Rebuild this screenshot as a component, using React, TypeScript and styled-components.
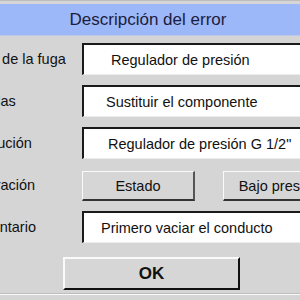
import React from "react";
import styled, { createGlobalStyle } from "styled-components";

const Global = createGlobalStyle`
  html, body {
    margin: 0;
    padding: 0;
    background: #d5d5d5;
    overflow: hidden;
  }
  body {
    font-family: "Liberation Sans", Arial, sans-serif;
  }
`;

interface Row {
  label: string;
  value: string;
  indent: number;
}

const rows: Row[] = [
  { label: "Lugar de la fuga", value: "Regulador de presión", indent: 27 },
  { label: "Medidas", value: "Sustituir el componente", indent: 22 },
  { label: "Sustitución", value: 'Regulador de presión G 1/2"', indent: 24 },
];

export default function App() {
  return (
    <>
      <Global />
      <Window>
        <TitleBar>Descripción del error</TitleBar>
        <Form>
          {rows.map((r) => (
            <React.Fragment key={r.label}>
              <Label>{r.label}</Label>
              <Field indent={r.indent}>{r.value}</Field>
            </React.Fragment>
          ))}
          <Label>Reparación</Label>
          <ButtonRow>
            <Button>Estado</Button>
            <Button>Bajo presión</Button>
          </ButtonRow>
          <Label>Comentario</Label>
          <Field indent={17}>Primero vaciar el conducto</Field>
        </Form>
        <Footer>
          <OkButton>OK</OkButton>
        </Footer>
        <StatusLine />
      </Window>
    </>
  );
}

const Window = styled.div`
  width: 380px;
  height: 300px;
  margin-left: -39px;
  padding-top: 2px;
  box-sizing: border-box;
  border-top: 1px solid #bdbdbd;
  display: flex;
  flex-direction: column;
`;

const TitleBar = styled.div`
  height: 31px;
  margin-top: 1px;
  background: #9db8f8;
  color: #1c1c40;
  font-size: 17px;
  display: flex;
  align-items: center;
  justify-content: center;
  padding-right: 6px;
  border-bottom: 1px solid #bcc8e6;
`;

const Form = styled.div`
  display: grid;
  grid-template-columns: 121px 1fr;
  grid-auto-rows: 32px;
  row-gap: 10px;
  align-items: center;
  margin-top: 7px;
  padding-right: 10px;
`;

const Label = styled.div`
  font-size: 14.5px;
  color: #111;
`;

const Field = styled.div<{ indent: number }>`
  height: 32px;
  box-sizing: border-box;
  background: #fff;
  border-top: 2px solid #1a1a1a;
  border-left: 2px solid #1a1a1a;
  border-bottom: 1px solid #ececec;
  border-right: 1px solid #ececec;
  padding-left: ${(p) => p.indent}px;
  display: flex;
  align-items: center;
  font-size: 14.5px;
  color: #111;
  white-space: nowrap;
`;

const ButtonRow = styled.div`
  display: flex;
  gap: 28px;
  height: 30px;
  margin-top: 2px;
`;

const Button = styled.div`
  width: 113px;
  height: 30px;
  box-sizing: border-box;
  background: #d6d6d6;
  border-top: 1px solid #fafafa;
  border-left: 1px solid #fafafa;
  border-bottom: 2px solid #333;
  border-right: 2px solid #555;
  display: flex;
  align-items: center;
  justify-content: center;
  font-size: 14.5px;
  color: #111;
  white-space: nowrap;
`;

const Footer = styled.div`
  display: flex;
  padding-left: 102px;
  margin-top: 14px;
`;

const OkButton = styled.div`
  width: 177px;
  height: 33px;
  box-sizing: border-box;
  background: #d6d6d6;
  border-top: 2px solid #fafafa;
  border-left: 2px solid #fafafa;
  border-bottom: 2px solid #111;
  border-right: 2px solid #111;
  display: flex;
  align-items: center;
  justify-content: center;
  font-size: 17px;
  font-weight: bold;
  color: #111;
`;

const StatusLine = styled.div`
  margin-top: 3px;
  border-top: 1px solid #bdbdbd;
  border-bottom: 1px solid #fafafa;
`;
